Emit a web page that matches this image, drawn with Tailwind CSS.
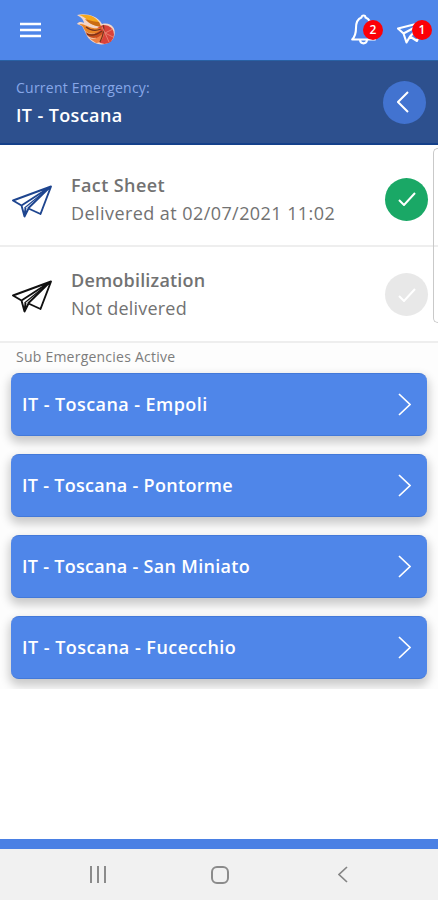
<!DOCTYPE html>
<html lang="en">
<head>
  <meta charset="UTF-8">
  <meta name="viewport" content="width=device-width, initial-scale=1.0">
  <title>Emergency</title>
  <script src="https://cdn.jsdelivr.net/npm/@tailwindcss/browser@4"></script>
</head>
<body class="bg-white font-['Open_Sans','Noto_Sans',sans-serif]">
  <!-- Paper plane shared by the rows -->
  <svg class="hidden">
    <symbol id="plane" viewBox="0 0 40 34">
      <path d="M1 15.500 39 1.500 28.500 29 16.500 23.500 12.500 31.500 9.500 20.500ZM9.500 20.500 38 2 16 23.500M12.500 31 13.500 23" fill="none" stroke="currentColor" stroke-width="1.900" stroke-linejoin="round"/>
      <path d="M12.500 23 37 3" fill="none" stroke="currentColor" stroke-width="1.200"/>
    </symbol>
  </svg>

  <div class="w-full h-[900px] flex flex-col overflow-hidden">
    <!-- Header -->
    <header class="h-[60px] shrink-0 bg-[#4f86e9] flex items-center pl-5 pr-[5px]">
      <svg class="w-[21px] h-4" viewBox="0 0 21 16" stroke="#fff" stroke-width="2.400">
        <path d="M0 2H21M0 8H21M0 14H21"/>
      </svg>
      <svg class="ml-9 w-[39px] h-[34px]" viewBox="0 0 39 34">
        <path d="M0 2C8 0 20 2 25 11C34 9 39 15 37.500 22C36 31 24 34 16 29C9 25 8 17 5 13L0 11C2 8 5 9 7 10C6 5 3 4 0 2Z" fill="#f3d5c7"/>
        <circle cx="27.500" cy="21.500" r="9.500" fill="#d9423a"/>
        <path d="M2 2C12 1 20 3 24 13C19 14 14 11 11 8C8 4 5 3 2 2Z" fill="#f5a81c"/>
        <path d="M8 6C14 8 19 9 22 9L24 14C18 13 12 11 8 6Z" fill="#ca6c13"/>
        <path d="M2 11C9 10 12 17 25 15C20 23 10 22 7 16C6 13 4 12 2 11Z" fill="#e98427"/>
        <path d="M8 18C12 23 19 21 26 17C25 26 14 27 10 22Z" fill="#c84e1b"/>
        <path d="M12 25C18 27 23 24 27 19C27 25 24 30 19 30Z" fill="#ee8245"/>
        <path d="M9 14C14 18 19 18 24 16M10 21C16 24 21 21 25 18M26 12C28 15 26 23 23 29" fill="none" stroke="#74321c" stroke-width="1.200"/>
        <path d="M25 14 28 20 32 29M28 20 36 16M28 20 36 24" fill="none" stroke="#e8806f" stroke-width="1"/>
      </svg>
      <div class="relative ml-auto w-[33px] h-8">
        <svg class="w-[26px] h-[31px]" viewBox="0 0 26 31" fill="none" stroke="#fff" stroke-width="2.100" stroke-linejoin="round">
          <path d="M10.500 3.500C10.500 .9 14.500 .9 14.500 3.500C19 5 20 9 20 14C20 19 21 22 24 25.500H1.200C4.500 22 5 19 5 14C5 9 6.500 5 10.500 3.500ZM9 26C9.500 30.500 15.500 30.500 16 26"/>
        </svg>
        <span class="absolute left-[12px] top-[6px] size-5 rounded-full bg-[#fb0007] text-white text-xs font-semibold leading-5 text-center">2</span>
      </div>
      <div class="relative ml-[13px] w-9 h-8">
        <svg class="mt-[7px] w-[27px] h-6" viewBox="0 0 27 24" fill="none" stroke="#fff" stroke-width="2.100" stroke-linejoin="round">
          <path d="M1 7.500 27 1 20 20 13 15.500 9.500 21.500 6.500 12.500ZM6.500 12.500 26 2 13 15.500"/>
        </svg>
        <span class="absolute left-[15px] top-[6px] size-5 rounded-full bg-[#fb0007] text-white text-xs font-semibold leading-5 text-center">1</span>
      </div>
    </header>

    <!-- Current emergency -->
    <section class="h-[85px] shrink-0 bg-[#2d508e] border-t border-[#2861a5] border-b-2 border-b-[#14408a] flex items-center justify-between pl-4 pr-3">
      <div class="-mt-[3px]">
        <p class="text-[14px] leading-7 tracking-[0.24px] text-[#87a7e8]">Current Emergency:</p>
        <p class="text-[18px] leading-[26px] tracking-[0.38px] font-semibold text-white">IT - Toscana</p>
      </div>
      <button class="size-[43px] rounded-full bg-[#4273d0] flex items-center justify-center">
        <svg class="w-3 h-[22px] mr-1" viewBox="0 0 12 22" fill="none" stroke="#fff" stroke-width="2"><path d="M11 1 1 11 11 21"/></svg>
      </button>
    </section>

    <!-- Reports -->
    <section class="relative shrink-0">
      <div class="h-[102px] border-b-2 border-[#eeeeee] flex items-center pl-3 pr-[10px] pt-[8px]">
        <svg class="mt-[5px] w-10 h-[34px] text-[#1e458f]"><use href="#plane"/></svg>
        <div class="ml-[19px] text-[18px] leading-7 text-[#727272]">
          <p class="font-semibold tracking-[0.4px]">Fact Sheet</p>
          <p class="tracking-[0.43px]">Delivered at 02/07/2021 11:02</p>
        </div>
        <span class="ml-auto size-[43px] rounded-full bg-[#1aa866] flex items-center justify-center">
          <svg class="w-[18px] h-[14px]" viewBox="0 0 18 14" fill="none" stroke="#fff" stroke-width="2"><path d="M1 8 6 13 17 1"/></svg>
        </span>
      </div>
      <div class="h-[96px] border-b-2 border-[#eeeeee] flex items-center pl-3 pr-[10px]">
        <svg class="mt-[6px] w-10 h-[34px] text-[#111111]"><use href="#plane"/></svg>
        <div class="ml-[19px] text-[18px] leading-7 text-[#727272]">
          <p class="font-semibold tracking-[0.2px]">Demobilization</p>
          <p class="tracking-[0.2px]">Not delivered</p>
        </div>
        <span class="mt-[1px] ml-auto size-[43px] rounded-full bg-[#e8e8e8] flex items-center justify-center">
          <svg class="w-[18px] h-[14px]" viewBox="0 0 18 14" fill="none" stroke="#fff" stroke-width="2"><path d="M1 8 6 13 17 1"/></svg>
        </span>
      </div>
      <!-- edge panel handle -->
      <span class="absolute right-0 top-[3px] w-[5px] h-[175px] rounded-l-md border border-r-0 border-[#c9c9c9]"></span>
    </section>

    <!-- Sub emergencies -->
    <section class="h-[346px] shrink-0 overflow-hidden bg-[#fdfdfd] px-[11px]">
      <h2 class="h-[30px] pl-[5px] text-[14px] leading-[27px] tracking-[0.23px] text-[#7c7c7c]">Sub Emergencies Active</h2>
      <div class="flex flex-col gap-[18px] text-[18px] font-semibold text-white">
        <a class="h-[63px] rounded-lg bg-[#4f86e9] border-y border-[#4379d9] shadow-[0_5px_10px_2px_rgba(0,0,0,0.2)] flex items-center justify-between pl-[11px] pr-4">
          <span class="tracking-[0.43px]">IT - Toscana - Empoli</span>
          <svg class="w-[13px] h-[23px]" viewBox="0 0 13 23" fill="none" stroke="#fff" stroke-width="1.700"><path d="M1 1 12 11.500 1 22"/></svg>
        </a>
        <a class="h-[63px] rounded-lg bg-[#4f86e9] border-y border-[#4379d9] shadow-[0_5px_10px_2px_rgba(0,0,0,0.2)] flex items-center justify-between pl-[11px] pr-4">
          <span class="tracking-[0.3px]">IT - Toscana - Pontorme</span>
          <svg class="w-[13px] h-[23px]" viewBox="0 0 13 23" fill="none" stroke="#fff" stroke-width="1.700"><path d="M1 1 12 11.500 1 22"/></svg>
        </a>
        <a class="h-[63px] rounded-lg bg-[#4f86e9] border-y border-[#4379d9] shadow-[0_5px_10px_2px_rgba(0,0,0,0.2)] flex items-center justify-between pl-[11px] pr-4">
          <span class="tracking-[0.3px]">IT - Toscana - San Miniato</span>
          <svg class="w-[13px] h-[23px]" viewBox="0 0 13 23" fill="none" stroke="#fff" stroke-width="1.700"><path d="M1 1 12 11.500 1 22"/></svg>
        </a>
        <a class="h-[63px] rounded-lg bg-[#4f86e9] border-y border-[#4379d9] shadow-[0_5px_10px_2px_rgba(0,0,0,0.2)] flex items-center justify-between pl-[11px] pr-4">
          <span class="tracking-[0.48px]">IT - Toscana - Fucecchio</span>
          <svg class="w-[13px] h-[23px]" viewBox="0 0 13 23" fill="none" stroke="#fff" stroke-width="1.700"><path d="M1 1 12 11.500 1 22"/></svg>
        </a>
      </div>
    </section>

    <!-- Android navigation -->
    <footer class="mt-auto shrink-0 h-[61px] border-t-[10px] border-[#4a80e4] bg-[#f1f1f1] flex items-center justify-between pl-[90px] pr-[90px]">
      <svg class="w-4 h-[17px]" viewBox="0 0 16 17" stroke="#8b8b8b" stroke-width="2"><path d="M1 0V17M8 0V17M15 0V17"/></svg>
      <span class="mr-[4px] size-[18px] rounded-[6px] border-2 border-[#8b8b8b]"></span>
      <svg class="w-[10px] h-[17px]" viewBox="0 0 10 17" fill="none" stroke="#858585" stroke-width="1.700"><path d="M9 1 1 8.500 9 16"/></svg>
    </footer>
  </div>
</body>
</html>
